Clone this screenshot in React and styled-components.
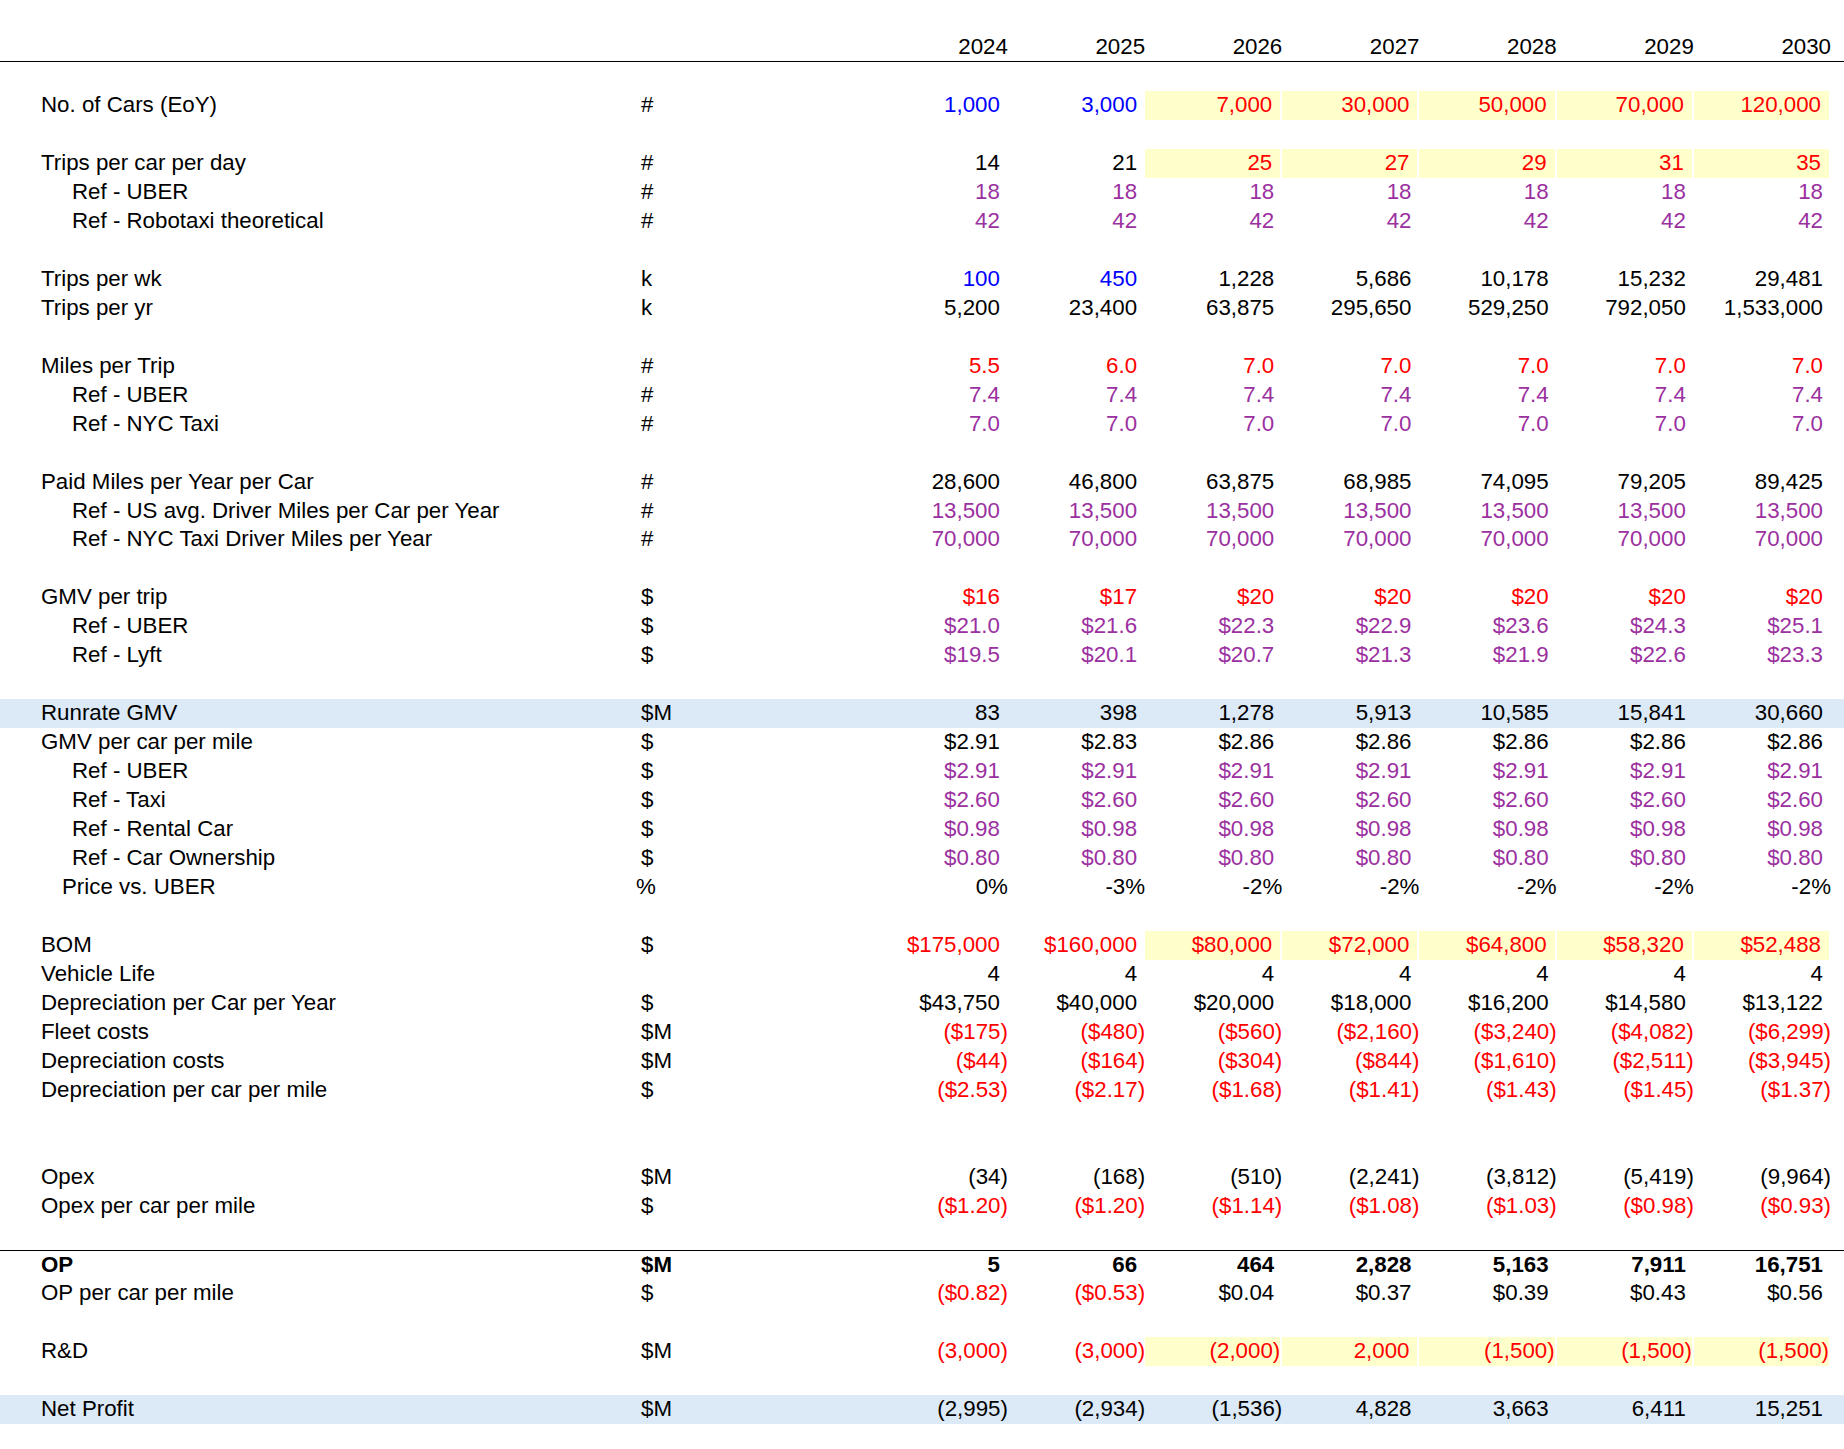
import React from 'react';
import styled, { createGlobalStyle } from 'styled-components';

const Global = createGlobalStyle`
  body { margin: 0; background: #fff; font-family: "Liberation Sans", Arial, sans-serif; }
`;

const Sheet = styled.div`
  width: 1844px;
  padding-top: 33px;
  font-size: 22.3px;
  color: #000;
`;

const Row = styled.div`
  display: grid;
  grid-template-columns: 641px 229.7px repeat(7, 137.2px) 1fr;
  height: 28.98px;
  line-height: 28.98px;
  background: ${p => (p.$band ? '#dce9f7' : 'transparent')};
  border-bottom: ${p => (p.$underline ? '1px solid #000' : 'none')};
  border-top: ${p => (p.$overline ? '1px solid #000' : 'none')};
  box-sizing: border-box;
  font-weight: ${p => (p.$bold ? 700 : 400)};
  white-space: nowrap;
`;

const Label = styled.div`
  padding-left: ${p => 41 + p.$indent}px;
`;

const Unit = styled.div``;

const Cell = styled.div`
  text-align: right;
  padding-right: ${p => (p.$tight ? 0 : 8)}px;
  color: ${p => p.$color};
  background: ${p => (p.$hl ? '#ffffcc' : 'transparent')};
  margin-right: ${p => (p.$hl ? 2 : 0)}px;
`;

const C = { k: '#000', b: '#0000ff', r: '#ff0000', p: '#9b30a0' };

// [label, indent, unit, values, colors (per column or single), highlight from index, options]
const rows = [
  null,
  ['No. of Cars (EoY)', 0, '#', ['1,000', '3,000', '7,000', '30,000', '50,000', '70,000', '120,000'], 'bbrrrrr', 2],
  null,
  ['Trips per car per day', 0, '#', ['14', '21', '25', '27', '29', '31', '35'], 'kkrrrrr', 2],
  ['Ref - UBER', 31, '#', Array(7).fill('18'), 'p'],
  ['Ref - Robotaxi theoretical', 31, '#', Array(7).fill('42'), 'p'],
  null,
  ['Trips per wk', 0, 'k', ['100', '450', '1,228', '5,686', '10,178', '15,232', '29,481'], 'bbkkkkk'],
  ['Trips per yr', 0, 'k', ['5,200', '23,400', '63,875', '295,650', '529,250', '792,050', '1,533,000'], 'k'],
  null,
  ['Miles per Trip', 0, '#', ['5.5', '6.0', '7.0', '7.0', '7.0', '7.0', '7.0'], 'r'],
  ['Ref - UBER', 31, '#', Array(7).fill('7.4'), 'p'],
  ['Ref - NYC Taxi', 31, '#', Array(7).fill('7.0'), 'p'],
  null,
  ['Paid Miles per Year per Car', 0, '#', ['28,600', '46,800', '63,875', '68,985', '74,095', '79,205', '89,425'], 'k'],
  ['Ref - US avg. Driver Miles per Car per Year', 31, '#', Array(7).fill('13,500'), 'p'],
  ['Ref - NYC Taxi Driver Miles per Year', 31, '#', Array(7).fill('70,000'), 'p'],
  null,
  ['GMV per trip', 0, '$', ['$16', '$17', '$20', '$20', '$20', '$20', '$20'], 'r'],
  ['Ref - UBER', 31, '$', ['$21.0', '$21.6', '$22.3', '$22.9', '$23.6', '$24.3', '$25.1'], 'p'],
  ['Ref - Lyft', 31, '$', ['$19.5', '$20.1', '$20.7', '$21.3', '$21.9', '$22.6', '$23.3'], 'p'],
  null,
  ['Runrate GMV', 0, '$M', ['83', '398', '1,278', '5,913', '10,585', '15,841', '30,660'], 'k', null, { band: true }],
  ['GMV per car per mile', 0, '$', ['$2.91', '$2.83', '$2.86', '$2.86', '$2.86', '$2.86', '$2.86'], 'k'],
  ['Ref - UBER', 31, '$', Array(7).fill('$2.91'), 'p'],
  ['Ref - Taxi', 31, '$', Array(7).fill('$2.60'), 'p'],
  ['Ref - Rental Car', 31, '$', Array(7).fill('$0.98'), 'p'],
  ['Ref - Car Ownership', 31, '$', Array(7).fill('$0.80'), 'p'],
  ['Price vs. UBER', 21, '%', ['0%', '-3%', '-2%', '-2%', '-2%', '-2%', '-2%'], 'k', null, { tight: true, unitShift: -5 }],
  null,
  ['BOM', 0, '$', ['$175,000', '$160,000', '$80,000', '$72,000', '$64,800', '$58,320', '$52,488'], 'r', 2],
  ['Vehicle Life', 0, '', Array(7).fill('4'), 'k'],
  ['Depreciation per Car per Year', 0, '$', ['$43,750', '$40,000', '$20,000', '$18,000', '$16,200', '$14,580', '$13,122'], 'k'],
  ['Fleet costs', 0, '$M', ['($175)', '($480)', '($560)', '($2,160)', '($3,240)', '($4,082)', '($6,299)'], 'r'],
  ['Depreciation costs', 0, '$M', ['($44)', '($164)', '($304)', '($844)', '($1,610)', '($2,511)', '($3,945)'], 'r'],
  ['Depreciation per car per mile', 0, '$', ['($2.53)', '($2.17)', '($1.68)', '($1.41)', '($1.43)', '($1.45)', '($1.37)'], 'r'],
  null,
  null,
  ['Opex', 0, '$M', ['(34)', '(168)', '(510)', '(2,241)', '(3,812)', '(5,419)', '(9,964)'], 'k'],
  ['Opex per car per mile', 0, '$', ['($1.20)', '($1.20)', '($1.14)', '($1.08)', '($1.03)', '($0.98)', '($0.93)'], 'r'],
  null,
  ['OP', 0, '$M', ['5', '66', '464', '2,828', '5,163', '7,911', '16,751'], 'k', null, { bold: true, overline: true }],
  ['OP per car per mile', 0, '$', ['($0.82)', '($0.53)', '$0.04', '$0.37', '$0.39', '$0.43', '$0.56'], 'rrkkkkk'],
  null,
  ['R&D', 0, '$M', ['(3,000)', '(3,000)', '(2,000)', '2,000', '(1,500)', '(1,500)', '(1,500)'], 'r', 2],
  null,
  ['Net Profit', 0, '$M', ['(2,995)', '(2,934)', '(1,536)', '4,828', '3,663', '6,411', '15,251'], 'k', null, { band: true }],
];

const years = ['2024', '2025', '2026', '2027', '2028', '2029', '2030'];

export default function App() {
  return (
    <>
      <Global />
      <Sheet>
        <Row $underline>
          <Label $indent={0} />
          <Unit />
          {years.map(y => (
            <Cell key={y} $tight $color="#000">{y}</Cell>
          ))}
        </Row>
        {rows.map((r, i) => {
          if (!r) return <Row key={i} />;
          const [label, indent, unit, vals, colors, hlFrom, opt = {}] = r;
          return (
            <Row key={i} $band={opt.band} $bold={opt.bold} $overline={opt.overline}>
              <Label $indent={indent}>{label}</Label>
              <Unit style={opt.unitShift ? { marginLeft: opt.unitShift } : undefined}>{unit}</Unit>
              {vals.map((v, j) => (
                <Cell
                  key={j}
                  $tight={opt.tight || v.endsWith(')')}
                  $color={C[colors.length > 1 ? colors[j] : colors]}
                  $hl={hlFrom != null && j >= hlFrom}
                >
                  {v}
                </Cell>
              ))}
            </Row>
          );
        })}
      </Sheet>
    </>
  );
}
